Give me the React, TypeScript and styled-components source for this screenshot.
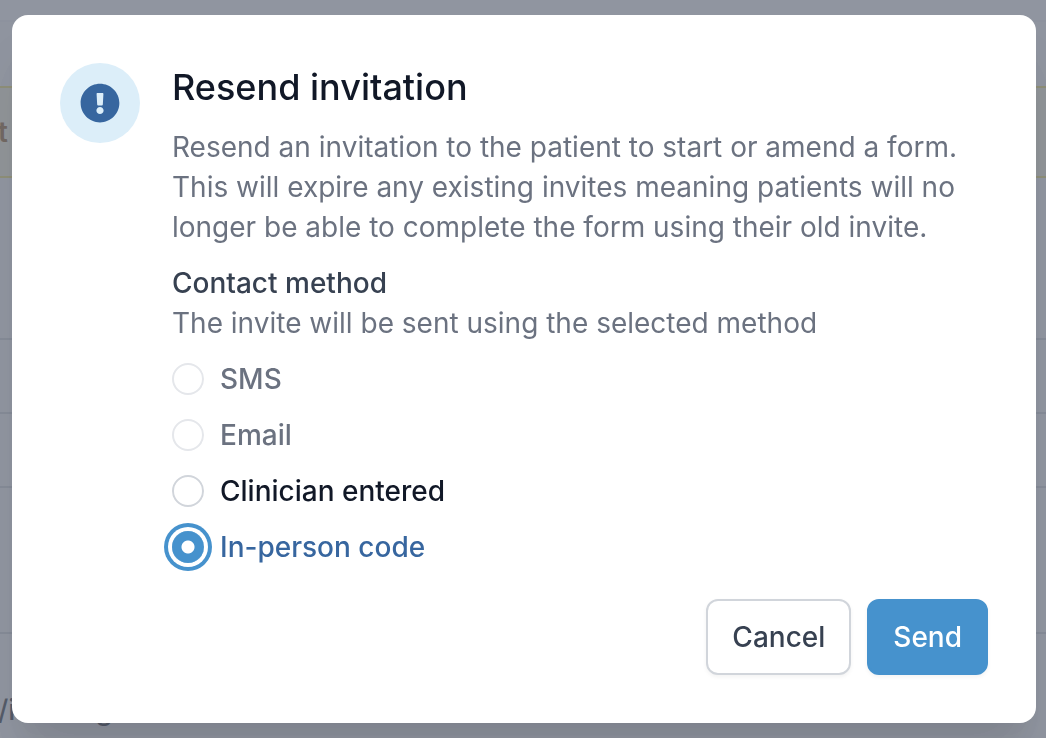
import React, { useState } from "react";
import styled, { createGlobalStyle, css } from "styled-components";

const GlobalStyle = createGlobalStyle`
  *, *::before, *::after { box-sizing: border-box; }
  body {
    margin: 0;
    background: #ffffff;
    color: #374151;
    font-family: Inter, "Liberation Sans", sans-serif;
    font-size: 28px;
    line-height: 40px;
  }
  h2, p, fieldset, legend { margin: 0; padding: 0; border: 0; }
`;

const Page = styled.div`
  height: 100vh;
  margin-left: -2px;
  overflow: hidden;
  color: #111827;
  font-weight: 500;
`;

const TopBar = styled.div`
  height: 22px;
  border-bottom: 2px solid #f3f4f6;
`;

const SubBar = styled.div`
  height: 48px;
  margin-bottom: 16px;
  background: #f9fafb;
`;

const Notice = styled.div`
  display: flex;
  align-items: center;
  height: 92px;
  border: solid #f5e663;
  border-width: 2px 0;
  background: #fdf8dc;
  color: #854d0e;
  font-weight: 600;
`;

const PageRow = styled.div<{ $height: number }>`
  display: flex;
  align-items: flex-end;
  height: ${({ $height }) => $height}px;
  padding-bottom: 24px;
  border-bottom: 2px solid #d1d5db;
`;

const ClippedCell = styled.span`
  margin-left: -14px;
`;

const LastRow = styled.div`
  display: flex;
  gap: 80px;
  padding-top: 56px;
`;

const Overlay = styled.div`
  position: fixed;
  inset: 0;
  display: flex;
  align-items: center;
  justify-content: center;
  padding: 0 10px 0 12px;
  background: rgba(107, 114, 128, 0.75);
`;

const Dialog = styled.form`
  width: 100%;
  max-width: 1024px;
  padding: 48px;
  border-radius: 16px;
  background: #ffffff;
  box-shadow: 0 40px 50px -10px rgba(0, 0, 0, 0.1), 0 20px 20px -10px rgba(0, 0, 0, 0.04);
`;

const DialogBody = styled.div`
  display: flex;
  align-items: flex-start;
  gap: 32px;
`;

const IconBadge = styled.div`
  display: flex;
  flex: none;
  align-items: center;
  justify-content: center;
  width: 80px;
  height: 80px;
  border-radius: 50%;
  background: #dceef9;
  color: #37669f;
`;

const Content = styled.div`
  display: flex;
  flex: 1;
  flex-direction: column;
  gap: 16px;
  min-width: 0;
`;

const Title = styled.h2`
  color: #111827;
  font-size: 36px;
  font-weight: 500;
  line-height: 48px;
`;

const Text = styled.p`
  color: #6b7280;
`;

const MethodGroup = styled.fieldset`
  min-width: 0;
`;

const MethodLegend = styled.legend`
  color: #374151;
  font-weight: 500;
`;

const OptionList = styled.div`
  display: flex;
  flex-direction: column;
  gap: 16px;
  margin-top: 16px;
`;

const Option = styled.label<{ $checked: boolean; $disabled: boolean }>`
  display: flex;
  align-items: center;
  gap: 16px;
  color: ${({ $checked, $disabled }) => ($disabled ? "#6b7280" : $checked ? "#37669f" : "#111827")};
  font-weight: 500;
`;

const Radio = styled.input`
  flex: none;
  appearance: none;
  width: 32px;
  height: 32px;
  margin: 0;
  border: 2px solid #d1d5db;
  border-radius: 50%;
  background: #ffffff;
  outline: none;

  &:disabled {
    border-color: #e5e7eb;
  }

  &:checked {
    border-color: #4692cd;
    background: radial-gradient(circle, #ffffff 6px, #4692cd 7px);
    box-shadow: 0 0 0 4px #ffffff, 0 0 0 8px #4692cd;
  }
`;

const Actions = styled.div`
  display: flex;
  justify-content: flex-end;
  gap: 16px;
  margin-top: 32px;
`;

const Button = styled.button<{ $primary?: boolean }>`
  padding: 16px 24px;
  border: 2px solid #d1d5db;
  border-radius: 12px;
  background: #ffffff;
  color: #374151;
  font: inherit;
  font-weight: 500;
  box-shadow: 0 2px 4px rgba(0, 0, 0, 0.05);

  ${({ $primary }) =>
    $primary &&
    css`
      border-color: #4692cd;
      background: #4692cd;
      color: #ffffff;
    `}
`;

const methods = [
  { id: "sms", label: "SMS", disabled: true },
  { id: "email", label: "Email", disabled: true },
  { id: "clinician", label: "Clinician entered", disabled: false },
  { id: "code", label: "In-person code", disabled: false },
];

function ExclamationIcon() {
  return (
    <svg width="40" height="40" viewBox="0 0 512 512" fill="currentColor" aria-hidden="true">
      <path d="M504 256c0 136.997-111.043 248-248 248S8 392.997 8 256C8 119.083 119.043 8 256 8s248 111.083 248 248zm-248 50c-25.405 0-46 20.595-46 46s20.595 46 46 46 46-20.595 46-46-20.595-46-46-46zm-43.673-165.346l7.418 136c.347 6.364 5.609 11.346 11.982 11.346h48.546c6.373 0 11.635-4.982 11.982-11.346l7.418-136c.375-6.874-5.098-12.654-11.982-12.654h-63.383c-6.884 0-12.356 5.78-11.981 12.654z" />
    </svg>
  );
}

export default function App() {
  const [method, setMethod] = useState("code");

  return (
    <>
      <GlobalStyle />
      <Page aria-hidden="true">
        <TopBar />
        <SubBar />
        <Notice>t</Notice>
        <PageRow $height={162}>
          <ClippedCell>y</ClippedCell>
        </PageRow>
        <PageRow $height={74} />
        <PageRow $height={74} />
        <PageRow $height={146} />
        <LastRow>
          <span>/i</span>
          <span>g</span>
        </LastRow>
      </Page>
      <Overlay>
        <Dialog
          role="dialog"
          aria-modal="true"
          aria-labelledby="dialog-title"
          onSubmit={(event: React.FormEvent) => event.preventDefault()}
        >
          <DialogBody>
            <IconBadge>
              <ExclamationIcon />
            </IconBadge>
            <Content>
              <Title id="dialog-title">Resend invitation</Title>
              <Text>
                Resend an invitation to the patient to start or amend a form. This will expire any
                existing invites meaning patients will no longer be able to complete the form using
                their old invite.
              </Text>
              <MethodGroup>
                <MethodLegend>Contact method</MethodLegend>
                <Text>The invite will be sent using the selected method</Text>
                <OptionList>
                  {methods.map(({ id, label, disabled }) => (
                    <Option key={id} htmlFor={id} $checked={method === id} $disabled={disabled}>
                      <Radio
                        type="radio"
                        id={id}
                        name="method"
                        value={id}
                        disabled={disabled}
                        checked={method === id}
                        onChange={() => setMethod(id)}
                      />
                      {label}
                    </Option>
                  ))}
                </OptionList>
              </MethodGroup>
            </Content>
          </DialogBody>
          <Actions>
            <Button type="button">Cancel</Button>
            <Button type="submit" $primary>
              Send
            </Button>
          </Actions>
        </Dialog>
      </Overlay>
    </>
  );
}
